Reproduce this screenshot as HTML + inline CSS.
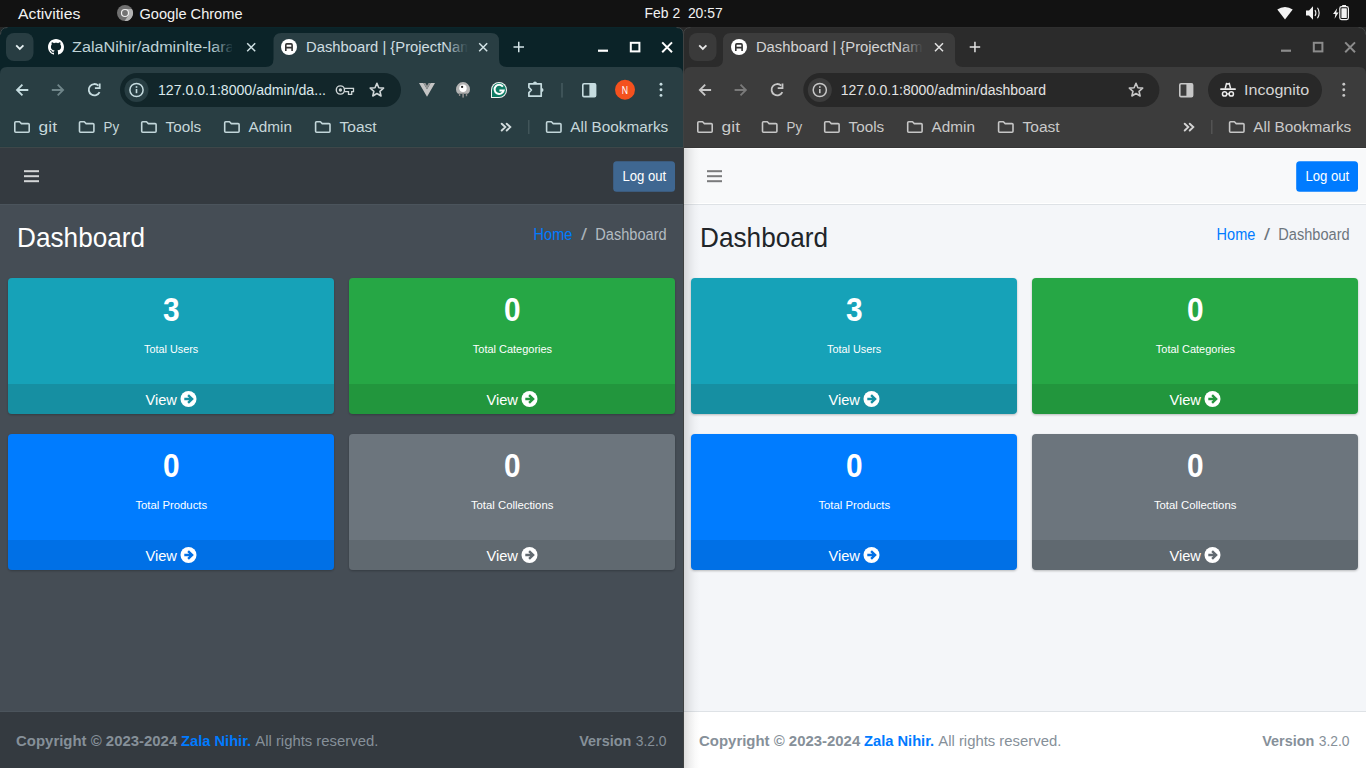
<!DOCTYPE html><html><head><meta charset="utf-8"><style>html,body{margin:0;padding:0;background:#121212;overflow:hidden;width:1366px;height:768px}svg{display:block}text{font-family:"Liberation Sans",sans-serif}</style></head><body>
<svg width="1366" height="768" viewBox="0 0 1366 768">
<defs><filter id="sh" x="-5%" y="-5%" width="110%" height="120%"><feDropShadow dx="0" dy="1" stdDeviation="1.2" flood-color="#000" flood-opacity="0.25"/></filter><linearGradient id="sideL" x1="0" x2="1" y1="0" y2="0"><stop offset="0" stop-color="#000" stop-opacity="0.13"/><stop offset="0.35" stop-color="#000" stop-opacity="0.065"/><stop offset="0.7" stop-color="#000" stop-opacity="0.02"/><stop offset="1" stop-color="#000" stop-opacity="0"/></linearGradient></defs>
<rect x="0" y="0" width="1366" height="27" rx="0" fill="#121212" />
<text x="18.00" y="19.00" font-size="14.93" font-weight="normal" fill="#f2f2f2" textLength="62.31" lengthAdjust="spacingAndGlyphs" >Activities</text>
<circle cx="125" cy="13" r="8" fill="#707070"/><path d="M125,8.9 H131.9 A8,8 0 0 1 124.6,21 L128.6,15.2 Z" fill="#b3b3b3"/><circle cx="125" cy="13" r="3.5" fill="#727272" stroke="#f0f0f0" stroke-width="1.2"/>
<text x="139.50" y="19.00" font-size="14.93" font-weight="normal" fill="#f2f2f2" textLength="103.00" lengthAdjust="spacingAndGlyphs" >Google Chrome</text>
<text x="644.60" y="18.00" font-size="14.49" font-weight="normal" fill="#f2f2f2" textLength="78.10" lengthAdjust="spacingAndGlyphs" xml:space="preserve">Feb 2  20:57</text>
<path d="M1285,19.5 L1277.3,9.6 A13,13 0 0 1 1292.7,9.6 Z" fill="#f2f2f2"/>
<path d="M1306,10.5 H1309 L1313,6.3 V19.7 L1309,15.5 H1306 Z" fill="#f2f2f2"/><path d="M1315,10 Q1316.8,13 1315,16" stroke="#f2f2f2" stroke-width="1.1" fill="none"/><path d="M1317.5,7.8 Q1320.8,13 1317.5,18.2" stroke="#f2f2f2" stroke-width="1.1" fill="none"/>
<path d="M1337.2,8.2 L1333,14 H1335.4 L1334.6,18.8 L1338.6,12.6 H1336.2 Z" fill="#f2f2f2"/><rect x="1339.8" y="6.6" width="8.6" height="13" rx="1.8" fill="none" stroke="#f2f2f2" stroke-width="1.2"/><rect x="1342.2" y="5" width="3.8" height="1.8" fill="#f2f2f2"/><rect x="1341.4" y="8.2" width="5.4" height="9.8" rx="0.6" fill="#f2f2f2"/>
<rect x="0" y="27" width="1366" height="9" rx="0" fill="#282828" />
<g>
<path d="M0,768 V34 Q0,27 7,27 H676 Q683,27 683,34 V768 Z" fill="#0b2328"/>
<path d="M0,148 V74 Q0,67 7,67 H676 Q683,67 683,74 V148 Z" fill="#293e43"/>
<rect x="0" y="146" width="683" height="1" rx="0" fill="#263d42" />
<rect x="0" y="147" width="683" height="1" rx="0" fill="#3e4749" />
<rect x="6" y="33" width="27.5" height="28" rx="8" fill="#283d42" />
<path d="M16.2,45.3 L19.8,48.9 L23.400000000000002,45.3" stroke="#e6f0f2" stroke-width="1.8" fill="none"/>
<path d="M265.5,67 Q273.5,67 273.5,59 V41 Q273.5,33 281.5,33 H491 Q499,33 499,41 V59 Q499,67 507,67 Z" fill="#293e43"/>
<g transform="translate(48,39)"><path fill="#fff" d="M8 0C3.58 0 0 3.58 0 8c0 3.54 2.29 6.53 5.47 7.59.4.07.55-.17.55-.38 0-.19-.01-.82-.01-1.49-2.01.37-2.53-.49-2.69-.94-.09-.23-.48-.94-.82-1.13-.28-.15-.68-.52-.01-.53.63-.01 1.08.58 1.23.82.72 1.21 1.87.87 2.33.66.07-.52.28-.87.51-1.07-1.78-.2-3.64-.89-3.64-3.95 0-.87.31-1.59.82-2.15-.08-.2-.36-1.02.08-2.12 0 0 .67-.21 2.2.82.64-.18 1.32-.27 2-.27.68 0 1.36.09 2 .27 1.53-1.04 2.2-.82 2.2-.82.44 1.1.16 1.92.08 2.12.51.56.82 1.27.82 2.15 0 3.07-1.87 3.75-3.65 3.95.29.25.54.73.54 1.48 0 1.07-.01 1.93-.01 2.2 0 .21.15.46.55.38A8.013 8.013 0 0016 8c0-4.42-3.58-8-8-8z"/></g>
<linearGradient id="fadeA" gradientUnits="userSpaceOnUse" x1="212" x2="234" y1="0" y2="0"><stop offset="0" stop-color="#bfd3d7"/><stop offset="1" stop-color="#bfd3d7" stop-opacity="0"/></linearGradient>
<text x="72.10" y="52.00" font-size="14.06" font-weight="normal" fill="url(#fadeA)" textLength="183.06" lengthAdjust="spacingAndGlyphs" clip-path="url(#clipA)">ZalaNihir/adminlte-laravel</text>
<clipPath id="clipA"><rect x="60" y="30" width="172" height="36"/></clipPath>
<path d="M247.2,43.2 L255.2,51.2 M255.2,43.2 L247.2,51.2" stroke="#cfe0e3" stroke-width="1.5" fill="none"/>
<circle cx="289" cy="47" r="8" fill="#fff"/>
<path d="M285.8,50.9 V44.9 Q285.8,43.9 286.8,43.9 H291.1 Q292.1,43.9 292.1,44.9 V50.9 M285.8,47.6 H292.1" stroke="#333" stroke-width="1.6" fill="none"/>
<linearGradient id="fadeB0" gradientUnits="userSpaceOnUse" x1="446" x2="468" y1="0" y2="0"><stop offset="0" stop-color="#cfdee1"/><stop offset="1" stop-color="#cfdee1" stop-opacity="0"/></linearGradient>
<clipPath id="clipB0"><rect x="302" y="30" width="166" height="36"/></clipPath>
<text x="306.00" y="52.00" font-size="14.06" font-weight="normal" fill="url(#fadeB0)" textLength="179.65" lengthAdjust="spacingAndGlyphs" clip-path="url(#clipB0)">Dashboard | {ProjectName}</text>
<path d="M479.2,43.2 L487.2,51.2 M487.2,43.2 L479.2,51.2" stroke="#d4e4e7" stroke-width="1.5" fill="none"/>
<path d="M513.5,47 H524.0 M518.75,41.8 V52.2" stroke="#d4e4e7" stroke-width="1.5" fill="none"/>
<rect x="598" y="49.6" width="10" height="2.2" rx="0" fill="#ffffff" />
<rect x="630.8" y="42.8" width="8.6" height="8.6" fill="none" stroke="#ffffff" stroke-width="2"/>
<path d="M662.2,42.4 L672,52.2 M672,42.4 L662.2,52.2" stroke="#ffffff" stroke-width="2" fill="none"/>
<path d="M28.3,90 H17.2 M22.4,84.6 L17,90 L22.4,95.4" stroke="#c6dce0" stroke-width="1.8" fill="none"/>
<path d="M51.8,90 H62.9 M57.7,84.6 L63.1,90 L57.7,95.4" stroke="#6f8589" stroke-width="1.8" fill="none"/>
<path d="M99.6,92.2 A5.7,5.7 0 1 1 98.4,85.6" stroke="#c6dce0" stroke-width="1.8" fill="none"/><path d="M99.7,83.4 V88.2 H94.9" stroke="#c6dce0" stroke-width="1.8" fill="none"/>
<rect x="120" y="73" width="281" height="34" rx="17" fill="#12262a" />
<circle cx="136.5" cy="90" r="12" fill="#283e43"/>
<circle cx="136.5" cy="90" r="6.6" fill="none" stroke="#c6dce0" stroke-width="1.5"/>
<rect x="135.7" y="89" width="1.6" height="4.2" fill="#c6dce0"/><rect x="135.7" y="86.2" width="1.6" height="1.6" fill="#c6dce0"/>
<text x="158.00" y="94.70" font-size="14.49" font-weight="normal" fill="#dbe9ec" textLength="168.00" lengthAdjust="spacingAndGlyphs" >127.0.0.1:8000/admin/da...</text>
<circle cx="340.4" cy="90" r="4.1" fill="none" stroke="#cfd6d7" stroke-width="1.4"/><circle cx="340.4" cy="90" r="1.7" fill="#cfd6d7"/>
<path d="M344.5,88.3 H353.5 V91.7 H351.7 V94.4 H348.5 V91.7 H344.5" fill="none" stroke="#cfd6d7" stroke-width="1.3"/>
<path d="M376.90,83.30 L378.78,87.71 L383.56,88.14 L379.94,91.29 L381.01,95.96 L376.90,93.50 L372.79,95.96 L373.86,91.29 L370.24,88.14 L375.02,87.71 Z" fill="none" stroke="#cfd6d7" stroke-width="1.6" stroke-linejoin="round"/>
<path d="M419,83 H423.4 L427,89.2 L430.6,83 H435 L427,96.8 Z" fill="#c4c4c4"/><path d="M423.4,83 H425.4 L427,85.8 L428.6,83 H430.6 L427,89.2 Z" fill="#979797"/>
<path d="M456,89.5 A7,7.5 0 0 1 470,89.5 Q470,92.6 468,93.8 H458 Q456,92.6 456,89.5 Z" fill="#b3b3b3"/><circle cx="463" cy="88.2" r="3.7" fill="#fff"/><circle cx="462.1" cy="86.9" r="1.15" fill="#222"/>
<rect x="458.9" y="93" width="1.4" height="3" fill="#8d8d8d"/><rect x="462.3" y="93" width="1.6" height="4.6" fill="#8d8d8d"/><rect x="465.8" y="93" width="1.4" height="3.2" fill="#8d8d8d"/>
<path d="M499,82 A8,8 0 1 1 499,98 H491 V90 A8,8 0 0 1 499,82 Z" fill="#f4f4f4"/><path d="M499,83 A7,7 0 1 1 499,97 H492 V90 A7,7 0 0 1 499,83 Z" fill="#0f7b64"/>
<path d="M502.9,86.6 A4.6,4.6 0 1 0 503.6,90.6 H499.4" stroke="#fff" stroke-width="2" fill="none"/>
<path d="M528.9,83.8 H541.2 V96.2 H528.9 V92.6 L531.4,90 L528.9,87.4 Z" fill="none" stroke="#c6dce0" stroke-width="1.7" stroke-linejoin="round"/>
<path d="M533,83.5 A2,2 0 0 1 537,83.5 Z M541.5,88 A2,2 0 0 1 541.5,92 Z" fill="#c6dce0"/>
<rect x="561.4" y="83" width="1.2" height="14.6" rx="0" fill="#4d6368" />
<rect x="582.8" y="83.8" width="12.8" height="12.8" rx="1.2" fill="none" stroke="#c6dce0" stroke-width="1.6"/><rect x="589.4" y="83.8" width="6.2" height="12.8" fill="#c6dce0"/>
<circle cx="625" cy="89.8" r="10" fill="#f4511e"/>
<text x="621.70" y="93.90" font-size="11.16" font-weight="normal" fill="#fff" textLength="6.30" lengthAdjust="spacingAndGlyphs" >N</text>
<circle cx="661" cy="84.2" r="1.45" fill="#c6dce0"/>
<circle cx="661" cy="89.8" r="1.45" fill="#c6dce0"/>
<circle cx="661" cy="95.4" r="1.45" fill="#c6dce0"/>
<path d="M14.8,122.8 Q14.8,121.8 15.8,121.8 H19.6 L21.4,123.6 H28.2 Q29.2,123.6 29.2,124.6 V131.2 Q29.2,132.2 28.2,132.2 H15.8 Q14.8,132.2 14.8,131.2 Z" fill="none" stroke="#c2d6da" stroke-width="1.6" stroke-linejoin="round"/>
<text x="38.60" y="131.90" font-size="14.49" font-weight="normal" fill="#c6d7da" textLength="18.40" lengthAdjust="spacingAndGlyphs" >git</text>
<path d="M79.5,122.8 Q79.5,121.8 80.5,121.8 H84.3 L86.10000000000001,123.6 H92.9 Q93.9,123.6 93.9,124.6 V131.2 Q93.9,132.2 92.9,132.2 H80.5 Q79.5,132.2 79.5,131.2 Z" fill="none" stroke="#c2d6da" stroke-width="1.6" stroke-linejoin="round"/>
<text x="103.60" y="131.90" font-size="14.49" font-weight="normal" fill="#c6d7da" textLength="15.60" lengthAdjust="spacingAndGlyphs" >Py</text>
<path d="M141.70000000000002,122.8 Q141.70000000000002,121.8 142.70000000000002,121.8 H146.5 L148.3,123.6 H155.1 Q156.1,123.6 156.1,124.6 V131.2 Q156.1,132.2 155.1,132.2 H142.70000000000002 Q141.70000000000002,132.2 141.70000000000002,131.2 Z" fill="none" stroke="#c2d6da" stroke-width="1.6" stroke-linejoin="round"/>
<text x="165.60" y="131.90" font-size="14.49" font-weight="normal" fill="#c6d7da" textLength="35.61" lengthAdjust="spacingAndGlyphs" >Tools</text>
<path d="M224.70000000000002,122.8 Q224.70000000000002,121.8 225.70000000000002,121.8 H229.5 L231.3,123.6 H238.1 Q239.1,123.6 239.1,124.6 V131.2 Q239.1,132.2 238.1,132.2 H225.70000000000002 Q224.70000000000002,132.2 224.70000000000002,131.2 Z" fill="none" stroke="#c2d6da" stroke-width="1.6" stroke-linejoin="round"/>
<text x="248.60" y="131.90" font-size="14.49" font-weight="normal" fill="#c6d7da" textLength="43.39" lengthAdjust="spacingAndGlyphs" >Admin</text>
<path d="M315.6,122.8 Q315.6,121.8 316.6,121.8 H320.40000000000003 L322.2,123.6 H329.0 Q330.0,123.6 330.0,124.6 V131.2 Q330.0,132.2 329.0,132.2 H316.6 Q315.6,132.2 315.6,131.2 Z" fill="none" stroke="#c2d6da" stroke-width="1.6" stroke-linejoin="round"/>
<text x="339.50" y="131.90" font-size="14.49" font-weight="normal" fill="#c6d7da" textLength="37.20" lengthAdjust="spacingAndGlyphs" >Toast</text>
<path d="M501.7,123.7 L505.3,127.1 L501.7,130.5 M506.7,123.7 L510.3,127.1 L506.7,130.5" stroke="#d2dcdd" stroke-width="1.9" fill="none" stroke-linecap="round"/>
<rect x="528.2" y="120" width="1.2" height="14" rx="0" fill="#475b5f" />
<path d="M546.5999999999999,122.8 Q546.5999999999999,121.8 547.5999999999999,121.8 H551.4 L553.1999999999999,123.6 H560.0 Q561.0,123.6 561.0,124.6 V131.2 Q561.0,132.2 560.0,132.2 H547.5999999999999 Q546.5999999999999,132.2 546.5999999999999,131.2 Z" fill="none" stroke="#c2d6da" stroke-width="1.6" stroke-linejoin="round"/>
<text x="570.30" y="131.90" font-size="14.49" font-weight="normal" fill="#c6d7da" textLength="97.99" lengthAdjust="spacingAndGlyphs" >All Bookmarks</text>
</g>
<g>
<path d="M684,768 V34 Q684,27 691,27 H1359 Q1366,27 1366,34 V768 Z" fill="#2b2b2b"/>
<path d="M684,148 V74 Q684,67 691,67 H1359 Q1366,67 1366,74 V148 Z" fill="#3c3c3c"/>
<rect x="684" y="146" width="682" height="1" rx="0" fill="#3c3c3c" />
<rect x="684" y="147" width="682" height="1" rx="0" fill="#363636" />
<rect x="689" y="33" width="27.5" height="28" rx="8" fill="#3a3a3a" />
<path d="M699.1999999999999,45.3 L702.8,48.9 L706.4,45.3" stroke="#e8e8e8" stroke-width="1.8" fill="none"/>
<path d="M715,67 Q723,67 723,59 V41 Q723,33 731,33 H947 Q955,33 955,41 V59 Q955,67 963,67 Z" fill="#3c3c3c"/>
<circle cx="739" cy="47" r="8" fill="#fff"/>
<path d="M735.8,50.9 V44.9 Q735.8,43.9 736.8,43.9 H741.1 Q742.1,43.9 742.1,44.9 V50.9 M735.8,47.6 H742.1" stroke="#333" stroke-width="1.6" fill="none"/>
<linearGradient id="fadeB684" gradientUnits="userSpaceOnUse" x1="901" x2="923" y1="0" y2="0"><stop offset="0" stop-color="#d4d4d4"/><stop offset="1" stop-color="#d4d4d4" stop-opacity="0"/></linearGradient>
<clipPath id="clipB684"><rect x="751.9" y="30" width="171.10000000000002" height="36"/></clipPath>
<text x="755.90" y="52.00" font-size="14.06" font-weight="normal" fill="url(#fadeB684)" textLength="179.90" lengthAdjust="spacingAndGlyphs" clip-path="url(#clipB684)">Dashboard | {ProjectName}</text>
<path d="M935,43.2 L943,51.2 M943,43.2 L935,51.2" stroke="#e3e3e3" stroke-width="1.5" fill="none"/>
<path d="M969.7,47 H980.2 M974.95,41.8 V52.2" stroke="#e3e3e3" stroke-width="1.5" fill="none"/>
<rect x="1281" y="49.6" width="10" height="2.2" rx="0" fill="#8c8c8c" />
<rect x="1313.8" y="42.8" width="8.6" height="8.6" fill="none" stroke="#8c8c8c" stroke-width="2"/>
<path d="M1345.2,42.4 L1355,52.2 M1355,42.4 L1345.2,52.2" stroke="#8c8c8c" stroke-width="2" fill="none"/>
<path d="M711.0999999999999,90 H700.0 M705.1999999999999,84.6 L699.8,90 L705.1999999999999,95.4" stroke="#c7c7c7" stroke-width="1.8" fill="none"/>
<path d="M734.5999999999999,90 H745.6999999999999 M740.5,84.6 L745.9,90 L740.5,95.4" stroke="#7a7a7a" stroke-width="1.8" fill="none"/>
<path d="M782.4,92.2 A5.7,5.7 0 1 1 781.1999999999999,85.6" stroke="#c7c7c7" stroke-width="1.8" fill="none"/><path d="M782.5,83.4 V88.2 H777.6999999999999" stroke="#c7c7c7" stroke-width="1.8" fill="none"/>
<rect x="803.3" y="73" width="356.10000000000014" height="34" rx="17" fill="#282828" />
<circle cx="819.8" cy="90" r="12" fill="#3c3c3c"/>
<circle cx="819.8" cy="90" r="6.6" fill="none" stroke="#c7c7c7" stroke-width="1.5"/>
<rect x="819.0" y="89" width="1.6" height="4.2" fill="#c7c7c7"/><rect x="819.0" y="86.2" width="1.6" height="1.6" fill="#c7c7c7"/>
<text x="840.70" y="94.70" font-size="14.49" font-weight="normal" fill="#e3e3e3" textLength="205.30" lengthAdjust="spacingAndGlyphs" >127.0.0.1:8000/admin/dashboard</text>
<path d="M1136.00,83.30 L1137.88,87.71 L1142.66,88.14 L1139.04,91.29 L1140.11,95.96 L1136.00,93.50 L1131.89,95.96 L1132.96,91.29 L1129.34,88.14 L1134.12,87.71 Z" fill="none" stroke="#c7c7c7" stroke-width="1.6" stroke-linejoin="round"/>
<rect x="1179.8" y="83.8" width="12.8" height="12.8" rx="1.2" fill="none" stroke="#c7c7c7" stroke-width="1.6"/><rect x="1186.4" y="83.8" width="6.2" height="12.8" fill="#c7c7c7"/>
<rect x="1208" y="73" width="114" height="34" rx="17" fill="#282828" />
<path d="M1225.2,88.6 L1226.5,83.4 L1227.9,84.1 L1229.3,83.4 L1230.6,88.6" fill="none" stroke="#ececec" stroke-width="1.5" stroke-linejoin="round"/><rect x="1220.2" y="88.3" width="15.6" height="1.7" rx="0.5" fill="#ececec"/>
<circle cx="1224.6" cy="93.9" r="2.15" fill="none" stroke="#ececec" stroke-width="1.5"/><circle cx="1231.3" cy="93.9" r="2.15" fill="none" stroke="#ececec" stroke-width="1.5"/><path d="M1226.6,93.9 H1229.3" stroke="#ececec" stroke-width="1.4"/>
<text x="1244.00" y="94.70" font-size="14.49" font-weight="normal" fill="#d4d4d4" textLength="65.29" lengthAdjust="spacingAndGlyphs" >Incognito</text>
<circle cx="1343.8" cy="84.2" r="1.45" fill="#c7c7c7"/>
<circle cx="1343.8" cy="89.8" r="1.45" fill="#c7c7c7"/>
<circle cx="1343.8" cy="95.4" r="1.45" fill="#c7c7c7"/>
<path d="M697.8,122.8 Q697.8,121.8 698.8,121.8 H702.6 L704.4,123.6 H711.2 Q712.2,123.6 712.2,124.6 V131.2 Q712.2,132.2 711.2,132.2 H698.8 Q697.8,132.2 697.8,131.2 Z" fill="none" stroke="#c6c6c6" stroke-width="1.6" stroke-linejoin="round"/>
<text x="721.60" y="131.90" font-size="14.49" font-weight="normal" fill="#c9c9c9" textLength="18.40" lengthAdjust="spacingAndGlyphs" >git</text>
<path d="M762.5,122.8 Q762.5,121.8 763.5,121.8 H767.3000000000001 L769.1,123.6 H775.9000000000001 Q776.9000000000001,123.6 776.9000000000001,124.6 V131.2 Q776.9000000000001,132.2 775.9000000000001,132.2 H763.5 Q762.5,132.2 762.5,131.2 Z" fill="none" stroke="#c6c6c6" stroke-width="1.6" stroke-linejoin="round"/>
<text x="786.60" y="131.90" font-size="14.49" font-weight="normal" fill="#c9c9c9" textLength="15.60" lengthAdjust="spacingAndGlyphs" >Py</text>
<path d="M824.6999999999999,122.8 Q824.6999999999999,121.8 825.6999999999999,121.8 H829.5 L831.3,123.6 H838.1 Q839.1,123.6 839.1,124.6 V131.2 Q839.1,132.2 838.1,132.2 H825.6999999999999 Q824.6999999999999,132.2 824.6999999999999,131.2 Z" fill="none" stroke="#c6c6c6" stroke-width="1.6" stroke-linejoin="round"/>
<text x="848.60" y="131.90" font-size="14.49" font-weight="normal" fill="#c9c9c9" textLength="35.61" lengthAdjust="spacingAndGlyphs" >Tools</text>
<path d="M907.6999999999999,122.8 Q907.6999999999999,121.8 908.6999999999999,121.8 H912.5 L914.3,123.6 H921.1 Q922.1,123.6 922.1,124.6 V131.2 Q922.1,132.2 921.1,132.2 H908.6999999999999 Q907.6999999999999,132.2 907.6999999999999,131.2 Z" fill="none" stroke="#c6c6c6" stroke-width="1.6" stroke-linejoin="round"/>
<text x="931.60" y="131.90" font-size="14.49" font-weight="normal" fill="#c9c9c9" textLength="43.39" lengthAdjust="spacingAndGlyphs" >Admin</text>
<path d="M998.5999999999999,122.8 Q998.5999999999999,121.8 999.5999999999999,121.8 H1003.4 L1005.1999999999999,123.6 H1012.0 Q1013.0,123.6 1013.0,124.6 V131.2 Q1013.0,132.2 1012.0,132.2 H999.5999999999999 Q998.5999999999999,132.2 998.5999999999999,131.2 Z" fill="none" stroke="#c6c6c6" stroke-width="1.6" stroke-linejoin="round"/>
<text x="1022.50" y="131.90" font-size="14.49" font-weight="normal" fill="#c9c9c9" textLength="37.20" lengthAdjust="spacingAndGlyphs" >Toast</text>
<path d="M1184.7,123.7 L1188.3,127.1 L1184.7,130.5 M1189.7,123.7 L1193.3,127.1 L1189.7,130.5" stroke="#d4d4d4" stroke-width="1.9" fill="none" stroke-linecap="round"/>
<rect x="1211.2" y="120" width="1.2" height="14" rx="0" fill="#5a5a5a" />
<path d="M1229.6,122.8 Q1229.6,121.8 1230.6,121.8 H1234.3999999999999 L1236.2,123.6 H1243.0 Q1244.0,123.6 1244.0,124.6 V131.2 Q1244.0,132.2 1243.0,132.2 H1230.6 Q1229.6,132.2 1229.6,131.2 Z" fill="none" stroke="#c6c6c6" stroke-width="1.6" stroke-linejoin="round"/>
<text x="1253.30" y="131.90" font-size="14.49" font-weight="normal" fill="#c9c9c9" textLength="97.99" lengthAdjust="spacingAndGlyphs" >All Bookmarks</text>
</g>
<rect x="0" y="148" width="683" height="56" rx="0" fill="#343a40" />
<rect x="0" y="204" width="683" height="1" rx="0" fill="#4b545c" />
<rect x="0" y="205" width="683" height="506" rx="0" fill="#454d55" />
<rect x="0" y="711" width="683" height="1" rx="0" fill="#4b545c" />
<rect x="0" y="712" width="683" height="56" rx="0" fill="#343a40" />
<rect x="24" y="170.2" width="15" height="2" rx="0" fill="#d4d6d8" />
<rect x="24" y="175.2" width="15" height="2" rx="0" fill="#d4d6d8" />
<rect x="24" y="180.2" width="15" height="2" rx="0" fill="#d4d6d8" />
<rect x="613.2" y="161.3" width="61.8" height="30.5" rx="3.5" fill="#3f6791" />
<text x="622.40" y="181.40" font-size="14.93" font-weight="normal" fill="#fff" textLength="43.81" lengthAdjust="spacingAndGlyphs" >Log out</text>
<text x="17.10" y="247.00" font-size="27.97" font-weight="normal" fill="#ffffff" textLength="127.90" lengthAdjust="spacingAndGlyphs" >Dashboard</text>
<text x="533.60" y="240.10" font-size="15.94" font-weight="normal" fill="#007bff" textLength="38.79" lengthAdjust="spacingAndGlyphs" >Home</text>
<text x="581.00" y="240.10" font-size="15.94" font-weight="normal" fill="#a9b1b8" textLength="6.00" lengthAdjust="spacingAndGlyphs" >/</text>
<text x="595.30" y="240.10" font-size="15.94" font-weight="normal" fill="#b4bcc2" textLength="71.30" lengthAdjust="spacingAndGlyphs" >Dashboard</text>
<g filter="url(#sh)">
<path d="M12,278 H330 Q334,278 334,282 V384 H8 V282 Q8,278 12,278 Z" fill="#17a2b8"/>
<path d="M8,384 H334 V410 Q334,414 330,414 H12 Q8,414 8,410 Z" fill="#148fa2"/>
</g>
<text x="162.90" y="321.00" font-size="33.62" font-weight="bold" fill="#fff" textLength="16.60" lengthAdjust="spacingAndGlyphs" >3</text>
<text x="144.10" y="353.00" font-size="11.74" font-weight="normal" fill="#fff" textLength="54.21" lengthAdjust="spacingAndGlyphs" >Total Users</text>
<text x="145.40" y="404.90" font-size="15.51" font-weight="normal" fill="#fff" textLength="31.56" lengthAdjust="spacingAndGlyphs" >View</text>
<circle cx="188.5" cy="399" r="8" fill="#fff"/>
<path d="M184.3,399 H191.7 M188.1,395.2 L192.1,399 L188.1,402.8" stroke="#148fa2" stroke-width="2.4" fill="none" stroke-linecap="butt" stroke-linejoin="miter"/>
<g filter="url(#sh)">
<path d="M353,278 H671 Q675,278 675,282 V384 H349 V282 Q349,278 353,278 Z" fill="#28a745"/>
<path d="M349,384 H675 V410 Q675,414 671,414 H353 Q349,414 349,410 Z" fill="#24963e"/>
</g>
<text x="503.90" y="321.00" font-size="33.62" font-weight="bold" fill="#fff" textLength="16.60" lengthAdjust="spacingAndGlyphs" >0</text>
<text x="472.80" y="353.00" font-size="11.74" font-weight="normal" fill="#fff" textLength="79.30" lengthAdjust="spacingAndGlyphs" >Total Categories</text>
<text x="486.40" y="404.90" font-size="15.51" font-weight="normal" fill="#fff" textLength="31.56" lengthAdjust="spacingAndGlyphs" >View</text>
<circle cx="529.5" cy="399" r="8" fill="#fff"/>
<path d="M525.3,399 H532.7 M529.1,395.2 L533.1,399 L529.1,402.8" stroke="#24963e" stroke-width="2.4" fill="none" stroke-linecap="butt" stroke-linejoin="miter"/>
<g filter="url(#sh)">
<path d="M12,434 H330 Q334,434 334,438 V540 H8 V438 Q8,434 12,434 Z" fill="#007bff"/>
<path d="M8,540 H334 V566 Q334,570 330,570 H12 Q8,570 8,566 Z" fill="#006fe6"/>
</g>
<text x="162.90" y="477.00" font-size="33.62" font-weight="bold" fill="#fff" textLength="16.60" lengthAdjust="spacingAndGlyphs" >0</text>
<text x="135.40" y="509.00" font-size="11.74" font-weight="normal" fill="#fff" textLength="71.71" lengthAdjust="spacingAndGlyphs" >Total Products</text>
<text x="145.40" y="560.90" font-size="15.51" font-weight="normal" fill="#fff" textLength="31.56" lengthAdjust="spacingAndGlyphs" >View</text>
<circle cx="188.5" cy="555" r="8" fill="#fff"/>
<path d="M184.3,555 H191.7 M188.1,551.2 L192.1,555 L188.1,558.8" stroke="#006fe6" stroke-width="2.4" fill="none" stroke-linecap="butt" stroke-linejoin="miter"/>
<g filter="url(#sh)">
<path d="M353,434 H671 Q675,434 675,438 V540 H349 V438 Q349,434 353,434 Z" fill="#6c757d"/>
<path d="M349,540 H675 V566 Q675,570 671,570 H353 Q349,570 349,566 Z" fill="#616970"/>
</g>
<text x="503.90" y="477.00" font-size="33.62" font-weight="bold" fill="#fff" textLength="16.60" lengthAdjust="spacingAndGlyphs" >0</text>
<text x="470.90" y="509.00" font-size="11.74" font-weight="normal" fill="#fff" textLength="82.50" lengthAdjust="spacingAndGlyphs" >Total Collections</text>
<text x="486.40" y="560.90" font-size="15.51" font-weight="normal" fill="#fff" textLength="31.56" lengthAdjust="spacingAndGlyphs" >View</text>
<circle cx="529.5" cy="555" r="8" fill="#fff"/>
<path d="M525.3,555 H532.7 M529.1,551.2 L533.1,555 L529.1,558.8" stroke="#616970" stroke-width="2.4" fill="none" stroke-linecap="butt" stroke-linejoin="miter"/>
<text x="16.10" y="746.00" font-size="14.93" font-weight="bold" fill="#869099" textLength="161.11" lengthAdjust="spacingAndGlyphs" >Copyright © 2023-2024</text>
<text x="181.00" y="746.00" font-size="14.93" font-weight="bold" fill="#007bff" textLength="70.20" lengthAdjust="spacingAndGlyphs" >Zala Nihir.</text>
<text x="255.30" y="746.00" font-size="14.93" font-weight="normal" fill="#869099" textLength="123.00" lengthAdjust="spacingAndGlyphs" >All rights reserved.</text>
<text x="579.20" y="746.00" font-size="14.93" font-weight="bold" fill="#869099" textLength="52.10" lengthAdjust="spacingAndGlyphs" >Version</text>
<text x="635.70" y="746.00" font-size="14.93" font-weight="normal" fill="#869099" textLength="30.80" lengthAdjust="spacingAndGlyphs" >3.2.0</text>
<rect x="684" y="148" width="682" height="56" rx="0" fill="#f8f9fa" />
<rect x="684" y="204" width="682" height="1" rx="0" fill="#dee2e6" />
<rect x="684" y="205" width="682" height="506" rx="0" fill="#f4f6f9" />
<rect x="684" y="711" width="682" height="1" rx="0" fill="#dee2e6" />
<rect x="684" y="712" width="682" height="56" rx="0" fill="#ffffff" />
<rect x="684" y="148" width="682" height="1" rx="0" fill="#ffffff" />
<rect x="684" y="203" width="682" height="1" rx="0" fill="#ffffff" />
<rect x="684" y="148" width="16" height="620" rx="0" fill="url(#sideL)" />
<rect x="707" y="170.2" width="15" height="2" rx="0" fill="#7a7b7c" />
<rect x="707" y="175.2" width="15" height="2" rx="0" fill="#7a7b7c" />
<rect x="707" y="180.2" width="15" height="2" rx="0" fill="#7a7b7c" />
<rect x="1296.2" y="161.3" width="61.8" height="30.5" rx="3.5" fill="#007bff" />
<text x="1305.40" y="181.40" font-size="14.93" font-weight="normal" fill="#fff" textLength="43.81" lengthAdjust="spacingAndGlyphs" >Log out</text>
<text x="700.10" y="247.00" font-size="27.97" font-weight="normal" fill="#212529" textLength="127.90" lengthAdjust="spacingAndGlyphs" >Dashboard</text>
<text x="1216.60" y="240.10" font-size="15.94" font-weight="normal" fill="#007bff" textLength="38.79" lengthAdjust="spacingAndGlyphs" >Home</text>
<text x="1264.00" y="240.10" font-size="15.94" font-weight="normal" fill="#6c757d" textLength="6.00" lengthAdjust="spacingAndGlyphs" >/</text>
<text x="1278.30" y="240.10" font-size="15.94" font-weight="normal" fill="#6c757d" textLength="71.30" lengthAdjust="spacingAndGlyphs" >Dashboard</text>
<g filter="url(#sh)">
<path d="M695,278 H1013 Q1017,278 1017,282 V384 H691 V282 Q691,278 695,278 Z" fill="#17a2b8"/>
<path d="M691,384 H1017 V410 Q1017,414 1013,414 H695 Q691,414 691,410 Z" fill="#148fa2"/>
</g>
<text x="845.90" y="321.00" font-size="33.62" font-weight="bold" fill="#fff" textLength="16.60" lengthAdjust="spacingAndGlyphs" >3</text>
<text x="827.10" y="353.00" font-size="11.74" font-weight="normal" fill="#fff" textLength="54.21" lengthAdjust="spacingAndGlyphs" >Total Users</text>
<text x="828.40" y="404.90" font-size="15.51" font-weight="normal" fill="#fff" textLength="31.56" lengthAdjust="spacingAndGlyphs" >View</text>
<circle cx="871.5" cy="399" r="8" fill="#fff"/>
<path d="M867.3,399 H874.7 M871.1,395.2 L875.1,399 L871.1,402.8" stroke="#148fa2" stroke-width="2.4" fill="none" stroke-linecap="butt" stroke-linejoin="miter"/>
<g filter="url(#sh)">
<path d="M1036,278 H1354 Q1358,278 1358,282 V384 H1032 V282 Q1032,278 1036,278 Z" fill="#28a745"/>
<path d="M1032,384 H1358 V410 Q1358,414 1354,414 H1036 Q1032,414 1032,410 Z" fill="#24963e"/>
</g>
<text x="1186.90" y="321.00" font-size="33.62" font-weight="bold" fill="#fff" textLength="16.60" lengthAdjust="spacingAndGlyphs" >0</text>
<text x="1155.80" y="353.00" font-size="11.74" font-weight="normal" fill="#fff" textLength="79.30" lengthAdjust="spacingAndGlyphs" >Total Categories</text>
<text x="1169.40" y="404.90" font-size="15.51" font-weight="normal" fill="#fff" textLength="31.56" lengthAdjust="spacingAndGlyphs" >View</text>
<circle cx="1212.5" cy="399" r="8" fill="#fff"/>
<path d="M1208.3,399 H1215.7 M1212.1,395.2 L1216.1,399 L1212.1,402.8" stroke="#24963e" stroke-width="2.4" fill="none" stroke-linecap="butt" stroke-linejoin="miter"/>
<g filter="url(#sh)">
<path d="M695,434 H1013 Q1017,434 1017,438 V540 H691 V438 Q691,434 695,434 Z" fill="#007bff"/>
<path d="M691,540 H1017 V566 Q1017,570 1013,570 H695 Q691,570 691,566 Z" fill="#006fe6"/>
</g>
<text x="845.90" y="477.00" font-size="33.62" font-weight="bold" fill="#fff" textLength="16.60" lengthAdjust="spacingAndGlyphs" >0</text>
<text x="818.40" y="509.00" font-size="11.74" font-weight="normal" fill="#fff" textLength="71.71" lengthAdjust="spacingAndGlyphs" >Total Products</text>
<text x="828.40" y="560.90" font-size="15.51" font-weight="normal" fill="#fff" textLength="31.56" lengthAdjust="spacingAndGlyphs" >View</text>
<circle cx="871.5" cy="555" r="8" fill="#fff"/>
<path d="M867.3,555 H874.7 M871.1,551.2 L875.1,555 L871.1,558.8" stroke="#006fe6" stroke-width="2.4" fill="none" stroke-linecap="butt" stroke-linejoin="miter"/>
<g filter="url(#sh)">
<path d="M1036,434 H1354 Q1358,434 1358,438 V540 H1032 V438 Q1032,434 1036,434 Z" fill="#6c757d"/>
<path d="M1032,540 H1358 V566 Q1358,570 1354,570 H1036 Q1032,570 1032,566 Z" fill="#616970"/>
</g>
<text x="1186.90" y="477.00" font-size="33.62" font-weight="bold" fill="#fff" textLength="16.60" lengthAdjust="spacingAndGlyphs" >0</text>
<text x="1153.90" y="509.00" font-size="11.74" font-weight="normal" fill="#fff" textLength="82.50" lengthAdjust="spacingAndGlyphs" >Total Collections</text>
<text x="1169.40" y="560.90" font-size="15.51" font-weight="normal" fill="#fff" textLength="31.56" lengthAdjust="spacingAndGlyphs" >View</text>
<circle cx="1212.5" cy="555" r="8" fill="#fff"/>
<path d="M1208.3,555 H1215.7 M1212.1,551.2 L1216.1,555 L1212.1,558.8" stroke="#616970" stroke-width="2.4" fill="none" stroke-linecap="butt" stroke-linejoin="miter"/>
<text x="699.10" y="746.00" font-size="14.93" font-weight="bold" fill="#869099" textLength="161.11" lengthAdjust="spacingAndGlyphs" >Copyright © 2023-2024</text>
<text x="864.00" y="746.00" font-size="14.93" font-weight="bold" fill="#007bff" textLength="70.20" lengthAdjust="spacingAndGlyphs" >Zala Nihir.</text>
<text x="938.30" y="746.00" font-size="14.93" font-weight="normal" fill="#869099" textLength="123.00" lengthAdjust="spacingAndGlyphs" >All rights reserved.</text>
<text x="1262.20" y="746.00" font-size="14.93" font-weight="bold" fill="#869099" textLength="52.10" lengthAdjust="spacingAndGlyphs" >Version</text>
<text x="1318.70" y="746.00" font-size="14.93" font-weight="normal" fill="#869099" textLength="30.80" lengthAdjust="spacingAndGlyphs" >3.2.0</text>
<rect x="683" y="34" width="1" height="734" rx="0" fill="#41484a" />
<path d="M0.5,34.5 Q0.5,27.5 7.5,27.5 M676.5,27.5 Q683.5,27.5 683.5,34.5 V768" fill="none" stroke="#3f4547" stroke-width="1"/>
<rect x="8" y="27" width="668" height="1" rx="0" fill="#0b262b" />
<path d="M683.5,768 V34.5 Q683.5,27.5 690.5,27.5 M1358.5,27.5 Q1365.5,27.5 1365.5,34.5" fill="none" stroke="#3f4242" stroke-width="1"/>
<rect x="691" y="27" width="667" height="1" rx="0" fill="#2e2e2e" />
</svg></body></html>
